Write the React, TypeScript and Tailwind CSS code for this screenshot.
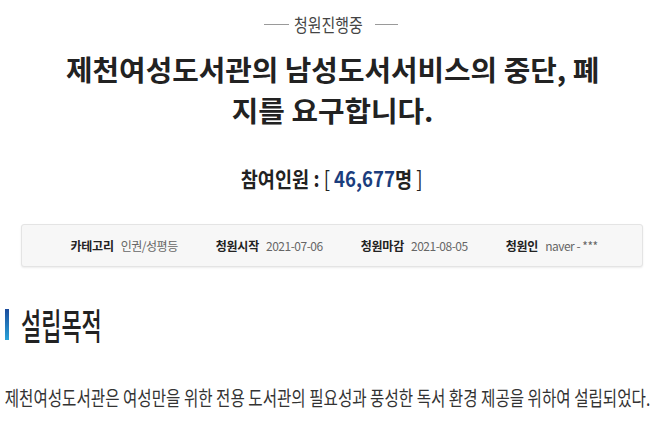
import React from "react";

const font = "font-['Noto_Sans_CJK_KR','Noto_Sans',sans-serif]";

function InfoItem({ label, value }: { label: string; value: string }) {
  return (
    <div className="flex items-center gap-[7px] whitespace-nowrap">
      <span className="text-[12px] font-bold text-[#222] leading-[16px] tracking-[-0.2px]">{label}</span>
      <span className="text-[12px] font-normal text-[#666] leading-[16px] tracking-[-0.5px]">{value}</span>
    </div>
  );
}

export default function App() {
  return (
    <div className={`w-[658px] h-[438px] overflow-hidden bg-white ${font}`}>
      {/* status header */}
      <div className="pt-[12px] flex items-center justify-center h-[36px] pl-[4px]">
        <span className="block w-[25px] h-px bg-[#9a9a9a]" />
        <span className="block w-[73px] ml-[5px] mr-[8px] h-[24px]">
          <span className="block origin-left scale-x-[0.83] whitespace-nowrap text-[18px] leading-[24px] text-[#444]">
            청원진행중
          </span>
        </span>
        <span className="block w-[23px] h-px bg-[#9a9a9a]" />
      </div>

      {/* title */}
      <h1 className="mt-[13px] pl-[7px] text-center text-[28px] leading-[41px] font-bold text-[#222] scale-x-[1.03] whitespace-nowrap">
        제천여성도서관의 남성도서서비스의 중단, 폐
        <br />
        지를 요구합니다.
      </h1>

      {/* participants */}
      <div className="mt-[32px] pl-[6px] text-center text-[21px] leading-[30px] text-[#222] scale-x-[0.885] whitespace-nowrap">
        <span className="font-bold">참여인원</span>
        <span className="font-bold"> : </span>
        <span className="font-normal">[ </span>
        <span className="font-bold text-[#1b3d7d]">46,677</span>
        <span className="font-bold">명</span>
        <span className="font-normal"> ]</span>
      </div>

      {/* info box */}
      <div className="mt-[31px] mx-[21px] w-[622px] h-[43px] rounded-[3px] border border-[#e4e4e4] bg-[#f7f7f7] shadow-[0_1px_2px_rgba(0,0,0,0.08)] flex items-center justify-center gap-[38px] pl-[4px]">
        <InfoItem label="카테고리" value="인권/성평등" />
        <InfoItem label="청원시작" value="2021-07-06" />
        <InfoItem label="청원마감" value="2021-08-05" />
        <InfoItem label="청원인" value="naver - ***" />
      </div>

      {/* section heading */}
      <div className="mt-[35px] pl-[5px] flex items-center gap-[12px] h-[44px]">
        <span className="block w-[4px] h-[31px] bg-gradient-to-b from-[#1c4c9c] to-[#2aa3d9]" />
        <span className="block w-[81px] h-[44px]">
          <span className="block origin-left scale-x-[0.61] whitespace-nowrap text-[36px] leading-[44px] font-medium text-[#222]">
            설립목적
          </span>
        </span>
      </div>

      {/* paragraph */}
      <p className="mt-[38px] pl-[6px] origin-left scale-x-[0.78] whitespace-nowrap text-[20px] leading-[28px] text-[#333]">
        제천여성도서관은 여성만을 위한 전용 도서관의 필요성과 풍성한 독서 환경 제공을 위하여 설립되었다.
      </p>
    </div>
  );
}
